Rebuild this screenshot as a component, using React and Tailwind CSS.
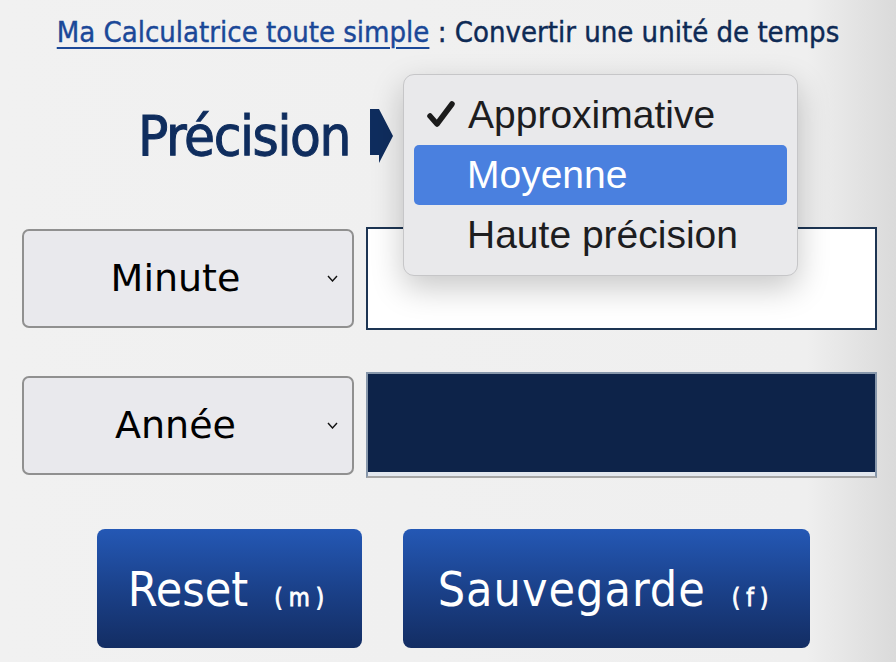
import React from 'react';

const techno = { fontFamily: '"DejaVu Sans Condensed", "DejaVu Sans", sans-serif' };

// petite flèche à droite de "Précision"
const Arrow = () => (
  <svg width="23" height="54" viewBox="0 0 23 54" className="shrink-0">
    <path d="M0 0 L9 0 L23 27 L9 54 L9 46 L0 46 Z" fill="#0f2d5e" />
  </svg>
);

const Check = () => (
  <svg width="28" height="28" viewBox="0 0 28 28" className="shrink-0">
    <path d="M3 15 L10 23 L25 3" fill="none" stroke="#1b1b1b" strokeWidth="5.5" strokeLinejoin="round" strokeLinecap="round" />
  </svg>
);

const Chevron = () => (
  <svg width="11" height="7" viewBox="0 0 11 7" className="shrink-0">
    <path d="M1 1 L5.5 6 L10 1" fill="none" stroke="#111" strokeWidth="1.4" />
  </svg>
);

const UnitSelect = ({ label }) => (
  <div className="w-[332px] h-[99px] shrink-0 flex items-center rounded-[7px] border-2 border-[#909090] bg-[#e9e9ed] pr-[14px]">
    <span
      className="flex-1 text-center text-[38px] text-black"
      style={{ fontFamily: '"DejaVu Sans", Verdana, sans-serif' }}
    >
      {label}
    </span>
    <Chevron />
  </div>
);

const App = () => {
  return (
    <div className="w-[896px] h-[662px] overflow-hidden bg-[linear-gradient(90deg,#f1f1f1_0%,#efefef_90%,#dadada_100%)]">
      {/* titre */}
      <div className="h-[66px] flex items-center justify-center text-[29px] text-[#0e2a55] [-webkit-text-stroke:0.4px_currentColor]" style={techno}>
        <span className="underline decoration-2 underline-offset-[5px] text-[#1b4898]">Ma Calculatrice toute simple</span>
        <span>&nbsp;: Convertir une unité de temps</span>
      </div>

      {/* précision */}
      <div className="relative h-[140px] flex items-center pl-[138px]">
        <span className="text-[56px] tracking-tight text-[#0f2d5e] mr-[20px] [-webkit-text-stroke:1px_#0f2d5e]" style={techno}>Précision</span>
        <Arrow />

        <div
          className="absolute left-[403px] top-[8px] w-[395px] rounded-[11px] border border-[#c6c6c8] bg-[#e9e9eb] px-[10px] py-[10px] shadow-[0_12px_32px_rgba(0,0,0,0.22)] text-[39px] text-[#1d1d1f]"
          style={{ fontFamily: '"Liberation Sans", Arial, sans-serif' }}
        >
          <div className="h-[60px] flex items-center pl-[13px]">
            <Check />
            <span className="ml-[13px]">Approximative</span>
          </div>
          <div className="h-[60px] flex items-center pl-[53px] rounded-[5px] bg-[#4a80df] text-white">Moyenne</div>
          <div className="h-[60px] flex items-center pl-[53px]">Haute précision</div>
        </div>
      </div>

      {/* conversions */}
      <div className="mt-[21px] flex flex-col gap-[42px] pl-[22px]">
        <div className="flex items-center gap-[12px]">
          <UnitSelect label="Minute" />
          <div className="w-[511px] h-[103px] border-2 border-[#1d3553] bg-white" />
        </div>
        <div className="flex items-center gap-[12px]">
          <UnitSelect label="Année" />
          <div className="w-[511px] h-[106px] border-2 border-[#8797ab] border-b-[#a6a6a6] bg-[#0d2349] shadow-[inset_0_-4px_0_#e2e7ee]" />
        </div>
      </div>

      {/* boutons */}
      <div className="mt-[51px] flex justify-center gap-[41px] pl-[10px]">
        <button className="w-[265px] h-[119px] rounded-[8px] bg-[linear-gradient(180deg,#2458b5_0%,#1a3f86_55%,#132d63_100%)] text-white flex items-center justify-center" style={techno}>
          <span className="leading-none">
            <span className="text-[48px]">Reset</span>
            <span className="ml-[26px] text-[24px] tracking-[6px] [-webkit-text-stroke:0.8px_white]">(m)</span>
          </span>
        </button>
        <button className="w-[407px] h-[119px] rounded-[8px] bg-[linear-gradient(180deg,#2458b5_0%,#1a3f86_55%,#132d63_100%)] text-white flex items-center justify-center" style={techno}>
          <span className="leading-none">
            <span className="text-[48px] tracking-[1px]">Sauvegarde</span>
            <span className="ml-[26px] text-[24px] tracking-[6px] [-webkit-text-stroke:0.8px_white]">(f)</span>
          </span>
        </button>
      </div>
    </div>
  );
};

export default App;
